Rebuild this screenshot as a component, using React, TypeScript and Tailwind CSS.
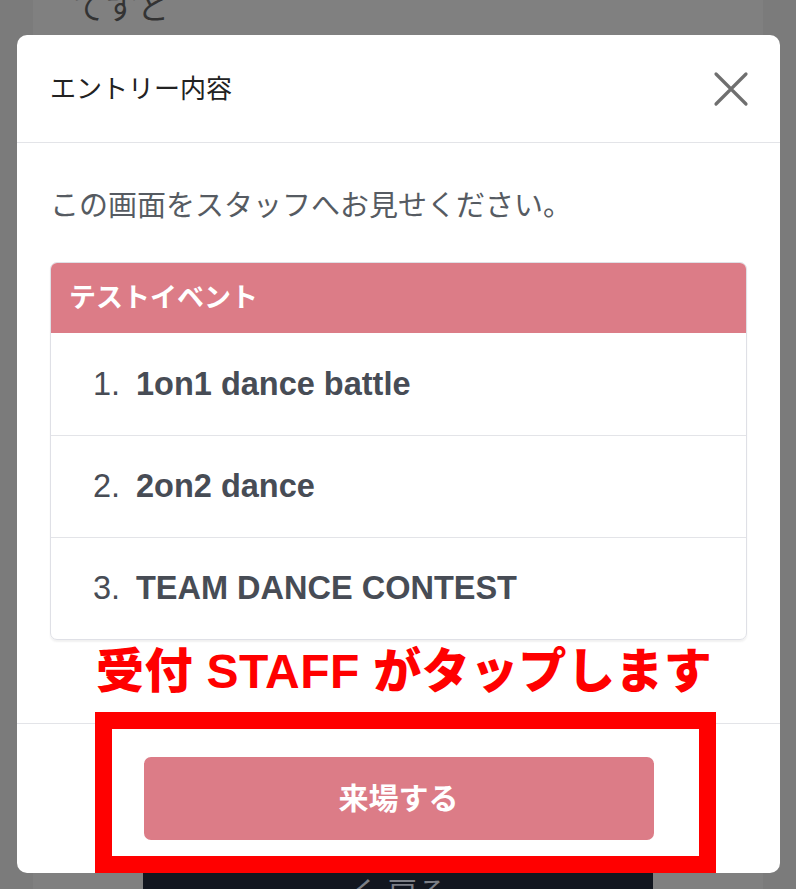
import React from 'react';

const FONT = "font-['Liberation_Sans','Noto_Sans_CJK_JP',sans-serif]";

const entries = ['1on1 dance battle', '2on2 dance', 'TEAM DANCE CONTEST'];

const CloseIcon: React.FC = () => (
  <svg width="36" height="36" viewBox="0 0 36 36" fill="none">
    <path d="M3 3L33 33M33 3L3 33" stroke="#6f6f6f" strokeWidth="3.2" strokeLinecap="round" />
  </svg>
);

const App: React.FC = () => {
  return (
    <div className={`${FONT} relative h-[889px] w-[796px] overflow-hidden bg-[#7b7b7b]`}>
      {/* page behind the overlay */}
      <div className="mx-[33px] flex h-full flex-col justify-between bg-[#808080]">
        <p className="-mt-[12px] pl-[40px] text-[32px] leading-[40px] text-[#333]">てすと</p>
        <div className="mx-auto flex h-[16px] w-[510px] justify-center bg-[#12161f] pt-[2px]">
          <span className="text-[30px] leading-[36px] text-[#7c7f86]">く 戻る</span>
        </div>
      </div>

      {/* modal */}
      <div className="absolute left-[17px] top-[35px] flex h-[838px] w-[763px] flex-col rounded-[10px] bg-white">
        <div className="flex h-[108px] items-center justify-between border-b border-[#e3e4e8] pl-[33px] pr-[31px]">
          <h2 className="text-[26px] leading-none text-[#222]">エントリー内容</h2>
          <CloseIcon />
        </div>

        <div className="flex-1 px-[33px] pt-[41px]">
          <p className="text-[29px] leading-[44px] text-[#565b62]">この画面をスタッフへお見せください。</p>
          <div className="mt-[34px] overflow-hidden rounded-[7px] border border-[#dfe0e6] shadow-[0_2px_2px_rgba(0,0,0,0.06)]">
            <div className="flex h-[70px] items-center bg-[#dc7c87] px-[18px]">
              <span className="text-[27px] font-bold text-white">テストイベント</span>
            </div>
            {entries.map((name, i) => (
              <div
                key={name}
                className={`flex h-[102px] items-center pl-[42px] text-[32.5px] text-[#474c55] ${i > 0 ? 'border-t border-[#e3e4e8]' : ''}`}
              >
                <span className="w-[43px]">{i + 1}.</span>
                <span className="font-bold">{name}</span>
              </div>
            ))}
          </div>
        </div>

        <div className="flex h-[150px] items-center justify-center border-t border-[#e3e4e8]">
          <button className="h-[83px] w-[510px] rounded-[7px] bg-[#dc7c87] text-[30px] font-bold text-white">
            来場する
          </button>
        </div>
      </div>

      {/* annotation */}
      <p className="absolute left-[96px] top-[642px] text-[48px] font-black leading-[60px] tracking-[0.4px] text-[#ff0000]">
        受付 STAFF がタップします
      </p>
      <div className="absolute left-[95px] top-[712px] h-[161px] w-[621px] border-[17px] border-[#ff0000]" />
    </div>
  );
};

export default App;
